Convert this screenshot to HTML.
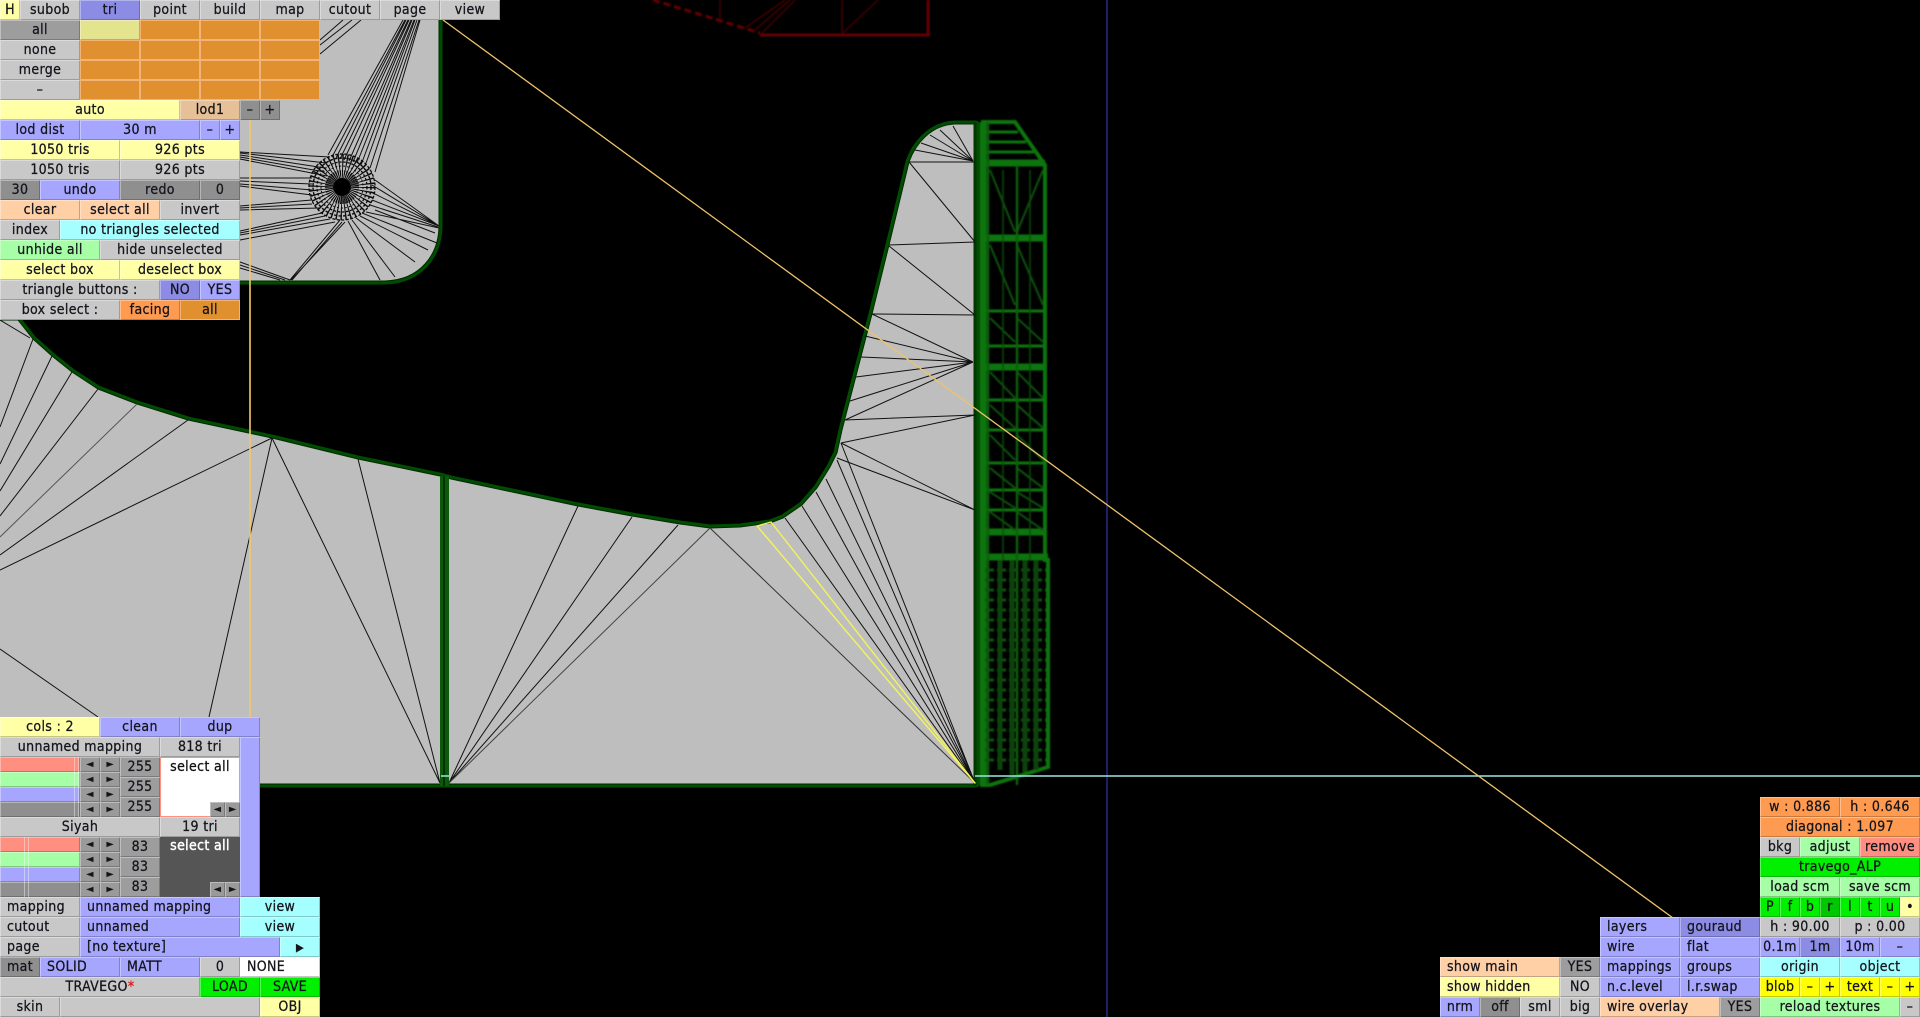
<!DOCTYPE html>
<html><head><meta charset="utf-8"><title>Editor</title>
<style>
html,body{margin:0;padding:0;background:#000;width:1920px;height:1017px;overflow:hidden}
svg{position:absolute;left:0;top:0}
b{position:absolute;display:block;height:20px;box-sizing:border-box;font:normal 14px/21px "DejaVu Sans Condensed","DejaVu Sans",sans-serif;font-stretch:condensed;letter-spacing:.35px;color:#14141c;-webkit-text-stroke:.25px #14141c;text-align:center;white-space:nowrap;overflow:hidden;box-shadow:inset 1px 1px 0 rgba(255,255,255,.35),inset -1px -1px 0 rgba(0,0,0,.22)}
.g{background:#c8c8c8}.d{background:#8f8f8f}.y{background:#ffffa6}.p{background:#ffcfa6}.u{background:#a6a6ff}.v{background:#8c8ce4}.c{background:#a6ffff}.n{background:#a6ffa6}.o{background:#e0902f;box-shadow:inset 0 0 0 1px #f2b474}.r{background:#ff9b50}.w{background:#fff}.t{background:#e6c096}.e{background:#00f000}.k{background:#00c800}.q{background:#ff8f80}.m{background:#e4e48e}.f{background:#ffff00}.x{background:#9d9d9d}
.l{text-align:left;padding-left:7px}
.a{height:15px;width:20px;font-size:10px;line-height:15px;background:#9a9a9a;letter-spacing:0}
.s{height:15px;width:80px}
.h{height:15px;width:5px;box-shadow:none;background:transparent;border-left:1px solid rgba(255,255,255,.4);border-right:1px solid rgba(255,255,255,.4)}
</style></head><body>
<svg width="1920" height="1017" viewBox="0 0 1920 1017" fill="none">
<defs>
<path id="A" d="M-10,-10 L439,-10 L439,225 C439,255 420,280 385,281 L-10,281 Z"/>
<path id="B" d="M-10,320 L18,320 L33,339 52,356 72,372 98,389 137,404 188,420 272,438 358,459 440,476 451,479 578,506 632,516 680,524 710,528 740,527 755,525 770,523 783,518 802,505 817,488 830,467 837,453 842,430 L872,314 L889,245 L909,162 C915,145 930,125 955,124 L976,124 L976,784 L-10,784 Z"/>
<filter id="bl" x="-5%" y="-5%" width="110%" height="110%"><feGaussianBlur stdDeviation="0.8"/></filter>
</defs>
<!-- red wire -->
<g stroke="#640000" stroke-width="1.5" filter="url(#bl)">
<path d="M653,0 L760,33" stroke-width="3" stroke-dasharray="7 4"/>
<path d="M760,35 H930 M928,0 V35" stroke-width="3"/>
<path d="M720,0 V20 M842,0 V33 M878,0 L843,33 M795,0 L762,33 M790,0 L755,30 M785,0 L745,28" stroke="#440000"/>
</g>
<!-- gray shapes -->
<g stroke="#004c00" stroke-width="7" stroke-linejoin="round"><use href="#A"/><use href="#B"/></g>
<g fill="#bebebe"><use href="#A"/><use href="#B"/></g>
<g stroke="#002a00" stroke-width="1"><use href="#A"/><use href="#B"/></g>
<!-- separator -->
<rect x="440" y="476" width="9" height="310" fill="#0b5a0b"/><rect x="443" y="476" width="2" height="310" fill="#003000"/>
<path d="M975,122 V786" stroke="#003800" stroke-width="3"/>
<!-- wire lines -->
<g stroke="#111" stroke-width="1">
<path d="M973,161 L953,126 M973,161 L940,130 M973,161 L930,135 M973,161 L921,143 M973,161 L915,150 M975,162 L909,162 M909,162 L975,242 M889,245 L975,242 M889,246 L975,315 M872,314 L975,315"/>
<path d="M973,362 L872,314 M973,362 L865,336 M973,362 L861,357 M973,362 L856,377 M973,362 L850,401 M973,362 L845,420 M845,420 L975,415 M841,443 L975,415 M841,443 L975,510 M837,458 L975,510"/>
<path d="M975,783 L841,443 M975,783 L837,460 M975,783 L826,479 M975,783 L816,492 M975,783 L802,506 M975,783 L785,518"/>
<path d="M975,783 L710,528" stroke="#333"/>
<path d="M449,783 L578,506 M449,783 L632,517 M449,783 L678,525"/><path d="M449,783 L710,528" stroke="#444"/>
<path d="M272,438 L209,717 M272,438 L440,783 M358,459 L440,783 M272,438 L0,570 M188,420 L0,555 M98,389 L0,516 M72,372 L0,491 M52,356 L0,464 M33,339 L0,427 M0,649 L98,717 M0,320 L30,338"/><path d="M137,404 L0,537" stroke="#555"/>
<!-- top fan -->
<path d="M328,155 L403,20 M332,157 L405,20 M336,158 L406,20 M340,159 L408,20 M344,160 L409,20 M349,161 L411,20 M353,162 L412,20 M357,163 L414,20 M361,165 L415,20 M365,166 L417,20 M370,168 L419,20 M375,172 L420,20"/>
<!-- left fans -->
<path d="M240,152 L330,157 M240,153 L326,163 M240,155 L325,168 M240,157 L325,172 M240,159 L327,176 M240,178 L312,178 M240,181 L312,184 M240,184 L312,190 M240,186 L312,195 M240,206 L312,200 M240,208 L312,204 M240,210 L320,208 M240,231 L322,213 M240,233 L325,216 M240,235 L330,219 M240,240 L335,222 M240,262 L290,280 M240,265 L285,280 M240,268 L280,280"/>
<path d="M291,280 L345,222 M292,280 L342,222 M290,280 L340,220"/>
<!-- lower right fan -->
<path d="M348,221 L380,280 M352,220 L395,277 M356,218 L415,262 M360,216 L428,250 M362,213 L437,243 M366,212 L439,228 M370,205 L438,227 M372,200 L439,226 M375,180 L439,226 M372,185 L439,226 M371,192 L439,226 M375,210 L435,233"/>
<path d="M320,40 L343,20 M320,45 L352,20 M320,54 L361,20"/>
</g>
<!-- hub -->
<g stroke="#0b0b0b">
<circle cx="342" cy="187" r="21" stroke-width="24" stroke-dasharray="1 2.3"/>
<circle cx="342" cy="187" r="13" stroke-width="8" stroke-dasharray="1 .9"/>
<circle cx="342" cy="187" r="33" stroke-width="1.3" stroke-dasharray="3 1.5"/>
<circle cx="342" cy="187" r="29" stroke-width="1.4" stroke-dasharray="3 1.6"/>
<circle cx="342" cy="187" r="25" stroke-width="1.3" stroke-dasharray="2.5 1.6"/>
<circle cx="342" cy="187" r="21" stroke-width="1" stroke-dasharray="2 2"/>
</g>
<circle cx="342" cy="187" r="9" fill="#000"/>
<!-- selected -->
<path d="M975,783 L757,526 L771,522 Z" stroke="#f4f45a" stroke-width="1.4" stroke-linejoin="round"/>
<!-- green wire -->
<g stroke="#0b740b" stroke-width="2" filter="url(#bl)">
<path d="M983,122 H1015 L1045,165 V560 H1048 V767 L990,785 H982 Z" stroke-width="4"/>
<path d="M983,122 V785" stroke-width="7"/>
<path d="M983,163 H1045 M983,238 H1045 M983,367 H1045 M983,532 H1045 M983,557 H1048" stroke-width="7"/>
<path d="M983,132 H1018 M983,142 H1026 M983,152 H1034 M983,311 H1045 M983,346 H1045 M983,400 H1045 M983,430 H1045 M983,463 H1045 M983,490 H1045 M983,510 H1045" stroke-width="3"/>
<path d="M990,170 L1015,232 M1043,170 L1017,232 M990,245 L1015,305 M1017,245 L1043,305 M990,318 L1015,342 M1017,318 L1043,342 M990,372 L1015,398 M1017,372 L1043,398 M990,405 L1015,428 M1017,405 L1043,428 M990,435 L1015,460 M1017,435 L1043,460 M990,468 L1015,488 M1017,468 L1043,488 M990,492 L1015,508 M1017,492 L1043,508 M990,512 L1015,530 M1017,512 L1043,530" stroke-width="2.2" stroke="#0a4d0a"/>
<path d="M988,122 V785 M1017,165 V785" stroke-width="2.5" stroke="#0a5e0a"/>
<path d="M1003,170 V560 M1030,170 V560" stroke-width="1.5" stroke="#084a08"/>
<path d="M985,570 H1046 M985,580 H1046 M985,590 H1046 M985,600 H1046 M985,610 H1046 M985,620 H1046 M985,630 H1046 M985,640 H1046 M985,650 H1046 M985,660 H1046 M985,670 H1046 M985,680 H1046 M985,690 H1046 M985,700 H1046 M985,710 H1046 M985,720 H1046 M985,730 H1046 M985,740 H1046 M985,750 H1046 M985,760 H1046" stroke-width="3" stroke="#0a520a" stroke-dasharray="9 3"/>
<path d="M1000,560 V770 M1012,560 V775 M1025,560 V772 M1036,560 V770" stroke-width="5" stroke="#074207"/>
</g>
<!-- guide lines -->
<path d="M1107,0 V1017" stroke="#3c3ccc" stroke-width="1"/>
<path d="M975,776 H1920 M441,776 H449" stroke="#9ce8e8" stroke-width="1.5"/>
<path d="M443,20 L1673,918" stroke="#efc36a" stroke-width="1.3"/>
<path d="M250,120 V717" stroke="#f0c86a" stroke-width="1.6"/>
</svg>

<!-- top menu -->
<b class="y" style="left:0;top:0;width:20px">H</b>
<b class="g" style="left:20px;top:0;width:60px">subob</b>
<b class="v" style="left:80px;top:0;width:60px">tri</b>
<b class="g" style="left:140px;top:0;width:60px">point</b>
<b class="g" style="left:200px;top:0;width:60px">build</b>
<b class="g" style="left:260px;top:0;width:60px">map</b>
<b class="g" style="left:320px;top:0;width:60px">cutout</b>
<b class="g" style="left:380px;top:0;width:60px">page</b>
<b class="g" style="left:440px;top:0;width:60px">view</b>
<b class="x" style="left:0;top:20px;width:80px">all</b>
<b class="m" style="left:80px;top:20px;width:60px"></b>
<b class="o" style="left:140px;top:20px;width:60px"></b>
<b class="o" style="left:200px;top:20px;width:60px"></b>
<b class="o" style="left:260px;top:20px;width:60px"></b>
<b class="g" style="left:0;top:40px;width:80px">none</b>
<b class="o" style="left:80px;top:40px;width:60px"></b>
<b class="o" style="left:140px;top:40px;width:60px"></b>
<b class="o" style="left:200px;top:40px;width:60px"></b>
<b class="o" style="left:260px;top:40px;width:60px"></b>
<b class="g" style="left:0;top:60px;width:80px">merge</b>
<b class="o" style="left:80px;top:60px;width:60px"></b>
<b class="o" style="left:140px;top:60px;width:60px"></b>
<b class="o" style="left:200px;top:60px;width:60px"></b>
<b class="o" style="left:260px;top:60px;width:60px"></b>
<b class="g" style="left:0;top:80px;width:80px">–</b>
<b class="o" style="left:80px;top:80px;width:60px"></b>
<b class="o" style="left:140px;top:80px;width:60px"></b>
<b class="o" style="left:200px;top:80px;width:60px"></b>
<b class="o" style="left:260px;top:80px;width:60px"></b>
<b class="y" style="left:0;top:100px;width:180px">auto</b>
<b class="t" style="left:180px;top:100px;width:60px">lod1</b>
<b class="d" style="left:240px;top:100px;width:20px">–</b>
<b class="d" style="left:260px;top:100px;width:20px">+</b>
<b class="u" style="left:0;top:120px;width:80px">lod dist</b>
<b class="u" style="left:80px;top:120px;width:120px">30 m</b>
<b class="u" style="left:200px;top:120px;width:20px">–</b>
<b class="u" style="left:220px;top:120px;width:20px">+</b>
<b class="y" style="left:0;top:140px;width:120px">1050 tris</b>
<b class="y" style="left:120px;top:140px;width:120px">926 pts</b>
<b class="g" style="left:0;top:160px;width:120px">1050 tris</b>
<b class="g" style="left:120px;top:160px;width:120px">926 pts</b>
<b class="d" style="left:0;top:180px;width:40px">30</b>
<b class="u" style="left:40px;top:180px;width:80px">undo</b>
<b class="d" style="left:120px;top:180px;width:80px">redo</b>
<b class="d" style="left:200px;top:180px;width:40px">0</b>
<b class="p" style="left:0;top:200px;width:80px">clear</b>
<b class="p" style="left:80px;top:200px;width:80px">select all</b>
<b class="g" style="left:160px;top:200px;width:80px">invert</b>
<b class="g" style="left:0;top:220px;width:60px">index</b>
<b class="c" style="left:60px;top:220px;width:180px">no triangles selected</b>
<b class="n" style="left:0;top:240px;width:100px">unhide all</b>
<b class="g" style="left:100px;top:240px;width:140px">hide unselected</b>
<b class="y" style="left:0;top:260px;width:120px">select box</b>
<b class="y" style="left:120px;top:260px;width:120px">deselect box</b>
<b class="g" style="left:0;top:280px;width:160px">triangle buttons :</b>
<b class="v" style="left:160px;top:280px;width:40px">NO</b>
<b class="u" style="left:200px;top:280px;width:40px">YES</b>
<b class="g" style="left:0;top:300px;width:120px">box select :</b>
<b class="r" style="left:120px;top:300px;width:60px">facing</b>
<b class="o" style="left:180px;top:300px;width:60px">all</b>

<!-- bottom-left -->
<b class="y" style="left:0;top:717px;width:100px">cols : 2</b>
<b class="u" style="left:100px;top:717px;width:80px">clean</b>
<b class="u" style="left:180px;top:717px;width:80px">dup</b>
<b class="g" style="left:0;top:737px;width:160px">unnamed mapping</b>
<b class="g" style="left:160px;top:737px;width:80px">818 tri</b>
<b class="u" style="left:240px;top:737px;width:20px;height:160px"></b>
<b class="q s" style="left:0;top:757px"></b><b class="h" style="left:74px;top:757px"></b>
<b class="n s" style="left:0;top:772px"></b><b class="h" style="left:74px;top:772px"></b>
<b class="u s" style="left:0;top:787px"></b><b class="h" style="left:74px;top:787px"></b>
<b class="d s" style="left:0;top:802px"></b><b class="h" style="left:74px;top:802px"></b>
<b class="a" style="left:80px;top:757px">◄</b><b class="a" style="left:100px;top:757px">►</b>
<b class="a" style="left:80px;top:772px">◄</b><b class="a" style="left:100px;top:772px">►</b>
<b class="a" style="left:80px;top:787px">◄</b><b class="a" style="left:100px;top:787px">►</b>
<b class="a" style="left:80px;top:802px">◄</b><b class="a" style="left:100px;top:802px">►</b>
<b class="x" style="left:120px;top:757px;width:40px">255</b>
<b class="x" style="left:120px;top:777px;width:40px">255</b>
<b class="x" style="left:120px;top:797px;width:40px">255</b>
<b class="w" style="left:160px;top:757px;width:80px;height:60px;box-shadow:none;border:1px solid #ff8f80;color:#111;line-height:19px">select all</b>
<b class="a" style="left:210px;top:802px;width:15px">◄</b><b class="a" style="left:225px;top:802px;width:15px">►</b>
<b class="g" style="left:0;top:817px;width:160px">Siyah</b>
<b class="g" style="left:160px;top:817px;width:80px">19 tri</b>
<b class="q s" style="left:0;top:837px"></b><b class="h" style="left:24px;top:837px"></b>
<b class="n s" style="left:0;top:852px"></b><b class="h" style="left:24px;top:852px"></b>
<b class="u s" style="left:0;top:867px"></b><b class="h" style="left:24px;top:867px"></b>
<b class="d s" style="left:0;top:882px"></b><b class="h" style="left:24px;top:882px"></b>
<b class="a" style="left:80px;top:837px">◄</b><b class="a" style="left:100px;top:837px">►</b>
<b class="a" style="left:80px;top:852px">◄</b><b class="a" style="left:100px;top:852px">►</b>
<b class="a" style="left:80px;top:867px">◄</b><b class="a" style="left:100px;top:867px">►</b>
<b class="a" style="left:80px;top:882px">◄</b><b class="a" style="left:100px;top:882px">►</b>
<b class="x" style="left:120px;top:837px;width:40px">83</b>
<b class="x" style="left:120px;top:857px;width:40px">83</b>
<b class="x" style="left:120px;top:877px;width:40px">83</b>
<b style="left:160px;top:837px;width:80px;height:60px;background:#555;color:#fff;-webkit-text-stroke:.4px #fff;box-shadow:none;line-height:19px">select all</b>
<b class="a" style="left:210px;top:882px;width:15px">◄</b><b class="a" style="left:225px;top:882px;width:15px">►</b>
<b class="g l" style="left:0;top:897px;width:80px">mapping</b>
<b class="u l" style="left:80px;top:897px;width:160px">unnamed mapping</b>
<b class="c" style="left:240px;top:897px;width:80px">view</b>
<b class="g l" style="left:0;top:917px;width:80px">cutout</b>
<b class="u l" style="left:80px;top:917px;width:160px">unnamed</b>
<b class="c" style="left:240px;top:917px;width:80px">view</b>
<b class="g l" style="left:0;top:937px;width:80px">page</b>
<b class="u l" style="left:80px;top:937px;width:200px">[no texture]</b>
<b class="c" style="left:280px;top:937px;width:40px;font-size:11px">▶</b>
<b class="d l" style="left:0;top:957px;width:40px">mat</b>
<b class="u l" style="left:40px;top:957px;width:80px">SOLID</b>
<b class="u l" style="left:120px;top:957px;width:80px">MATT</b>
<b class="g" style="left:200px;top:957px;width:40px">0</b>
<b class="w l" style="left:240px;top:957px;width:80px">NONE</b>
<b class="g" style="left:0;top:977px;width:200px">TRAVEGO<span style="color:#e01010;-webkit-text-stroke:.25px #e01010">*</span></b>
<b class="e" style="left:200px;top:977px;width:60px">LOAD</b>
<b class="e" style="left:260px;top:977px;width:60px">SAVE</b>
<b class="g" style="left:0;top:997px;width:60px">skin</b>
<b class="g" style="left:60px;top:997px;width:200px"></b>
<b class="y" style="left:260px;top:997px;width:60px">OBJ</b>

<!-- bottom-right -->
<b class="r" style="left:1760px;top:797px;width:80px">w : 0.886</b>
<b class="r" style="left:1840px;top:797px;width:80px">h : 0.646</b>
<b class="r" style="left:1760px;top:817px;width:160px">diagonal : 1.097</b>
<b class="g" style="left:1760px;top:837px;width:40px">bkg</b>
<b class="n" style="left:1800px;top:837px;width:60px">adjust</b>
<b class="q" style="left:1860px;top:837px;width:60px">remove</b>
<b class="e" style="left:1760px;top:857px;width:160px">travego_ALP</b>
<b class="n" style="left:1760px;top:877px;width:80px">load scm</b>
<b class="n" style="left:1840px;top:877px;width:80px">save scm</b>
<b class="e" style="left:1760px;top:897px;width:20px">P</b>
<b class="e" style="left:1780px;top:897px;width:20px">f</b>
<b class="e" style="left:1800px;top:897px;width:20px">b</b>
<b class="k" style="left:1820px;top:897px;width:20px">r</b>
<b class="e" style="left:1840px;top:897px;width:20px">l</b>
<b class="e" style="left:1860px;top:897px;width:20px">t</b>
<b class="e" style="left:1880px;top:897px;width:20px">u</b>
<b class="y" style="left:1900px;top:897px;width:20px">•</b>
<b class="g" style="left:1760px;top:917px;width:80px">h : 90.00</b>
<b class="g" style="left:1840px;top:917px;width:80px">p : 0.00</b>
<b class="u" style="left:1760px;top:937px;width:40px">0.1m</b>
<b class="v" style="left:1800px;top:937px;width:40px">1m</b>
<b class="u" style="left:1840px;top:937px;width:40px">10m</b>
<b class="u" style="left:1880px;top:937px;width:40px">–</b>
<b class="c" style="left:1760px;top:957px;width:80px">origin</b>
<b class="c" style="left:1840px;top:957px;width:80px">object</b>
<b class="f" style="left:1760px;top:977px;width:40px">blob</b>
<b class="f" style="left:1800px;top:977px;width:20px">–</b>
<b class="f" style="left:1820px;top:977px;width:20px">+</b>
<b class="f" style="left:1840px;top:977px;width:40px">text</b>
<b class="f" style="left:1880px;top:977px;width:20px">–</b>
<b class="f" style="left:1900px;top:977px;width:20px">+</b>
<b class="n" style="left:1760px;top:997px;width:140px">reload textures</b>
<b class="g" style="left:1900px;top:997px;width:20px">–</b>
<b class="u l" style="left:1600px;top:917px;width:80px">layers</b>
<b class="v l" style="left:1680px;top:917px;width:80px">gouraud</b>
<b class="u l" style="left:1600px;top:937px;width:80px">wire</b>
<b class="u l" style="left:1680px;top:937px;width:80px">flat</b>
<b class="u l" style="left:1600px;top:957px;width:80px">mappings</b>
<b class="u l" style="left:1680px;top:957px;width:80px">groups</b>
<b class="u l" style="left:1600px;top:977px;width:80px">n.c.level</b>
<b class="u l" style="left:1680px;top:977px;width:80px">l.r.swap</b>
<b class="p l" style="left:1600px;top:997px;width:120px">wire overlay</b>
<b class="x" style="left:1720px;top:997px;width:40px">YES</b>
<b class="p l" style="left:1440px;top:957px;width:120px">show main</b>
<b class="x" style="left:1560px;top:957px;width:40px">YES</b>
<b class="y l" style="left:1440px;top:977px;width:120px">show hidden</b>
<b class="g" style="left:1560px;top:977px;width:40px">NO</b>
<b class="u" style="left:1440px;top:997px;width:40px">nrm</b>
<b class="d" style="left:1480px;top:997px;width:40px">off</b>
<b class="g" style="left:1520px;top:997px;width:40px">sml</b>
<b class="g" style="left:1560px;top:997px;width:40px">big</b>
</body></html>
